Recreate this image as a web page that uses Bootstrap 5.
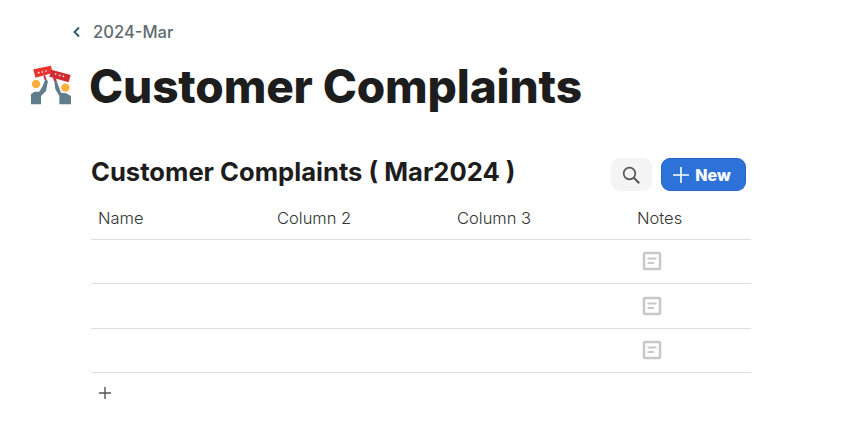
<!DOCTYPE html>
<html lang="en">
<head>
    <meta charset="UTF-8">
    <meta name="viewport" content="width=device-width, initial-scale=1.0">
    <title>Customer Complaints</title>
    <link href="https://cdn.jsdelivr.net/npm/bootstrap@5.3.0/dist/css/bootstrap.min.css" rel="stylesheet">
    <style>
        html, body { overflow: hidden; }
        body { font-family: Inter, "Liberation Sans", sans-serif; color: #1d1d1d; background: #fff; }
        .page-wrap { padding: 22px 0 0 30px; }
        .crumb { padding-left: 42px; height: 20px; gap: 12px; color: #5f6b70; font-size: 16.6px; font-weight: 500; line-height: 20px; }
        .title-row { margin-top: 18px; gap: 17px; height: 52px; }
        .page-title { font-size: 46px; font-weight: 800; line-height: 52px; letter-spacing: -0.15px; margin: 0; color: #1d1d1d; }
        .db-wrap { width: 660px; margin: 46px 0 0 61px; }
        .db-head { height: 44px; padding-right: 5px; }
        .db-title { font-size: 25.6px; font-weight: 700; line-height: 28px; margin: 0; color: #1d1d1d; }
        .head-btns { gap: 9px; }
        .btn-search { width: 41px; height: 33px; background: #f4f4f4; border-radius: 9px; border: 0; padding: 0 2px 0 0; }
        .btn-new { width: 85px; height: 33px; background: #2d72d9; border: 1px solid #2667c6; border-radius: 9px; color: #fff; font-size: 16px; font-weight: 800; padding: 0 3px 0 0; gap: 6px; }
        .btn-new:hover { background: #2d72d9; color: #fff; }
        .db-table { table-layout: fixed; width: 660px; margin: 0; }
        .db-table th, .db-table td { border-bottom: 1px solid #dedede; padding: 0 6px; height: 44px; vertical-align: middle; }
        .db-table tbody tr:nth-child(2) td { height: 45px; }
        .db-table th { font-size: 16.5px; font-weight: 300; color: #333; height: 37px; padding-bottom: 3px; }
        .db-table th:nth-child(1) { width: 180px; padding-left: 7px; }
        .db-table th:nth-child(2), .db-table th:nth-child(3) { width: 180px; }
        .db-table th:nth-child(4) { width: 120px; }
        .db-table td svg { display: block; margin-left: 5px; }
        .add-row { height: 40px; padding-left: 8px; }
    </style>
</head>
<body>
    <div class="page-wrap">
        <div class="crumb d-flex align-items-center">
            <svg width="9" height="12" viewBox="0 0 9 12"><path d="M7 1.5 2.5 6 7 10.5" fill="none" stroke="#2f5f7c" stroke-width="2"/></svg>
            <span>2024-Mar</span>
        </div>
        <div class="title-row d-flex align-items-center">
            <svg width="42" height="42" viewBox="12 12 126 126">
                <path d="M22 25 75 14 80 36 28 50z" fill="#e8362f"/>
                <path d="M76 26 134 42 128 64 70 47z" fill="#cf2b33"/>
                <path d="M52 44 58 43 62 58 56 58zM78 42 90 46 92 62 85 62z" fill="#c9303a"/>
                <g fill="#fff"><circle cx="38" cy="35" r="2.5"/><circle cx="49" cy="33" r="2.5"/><circle cx="60" cy="30" r="2.5"/><circle cx="89" cy="39" r="2.5"/><circle cx="101" cy="43" r="2.5"/><circle cx="112" cy="46" r="2.5"/></g>
                <circle cx="30" cy="69" r="12.5" fill="#fbb03b"/>
                <circle cx="118" cy="80" r="12.5" fill="#fbb03b"/>
                <path d="M58 55 66 60 60 90 45 105V130H15V100L25 92H40L50 75z" fill="#5f7d8c"/>
                <path d="M85 62 92 60 105 95 120 97 135 105V130H100V105L88 85z" fill="#5f7d8c"/>
            </svg>
            <h1 class="page-title">Customer Complaints</h1>
        </div>
        <div class="db-wrap">
            <div class="db-head d-flex justify-content-between align-items-start">
                <h2 class="db-title">Customer Complaints ( Mar2024 )</h2>
                <div class="head-btns d-flex">
                    <button class="btn btn-search d-flex align-items-center justify-content-center" type="button" aria-label="Search">
                        <svg width="20" height="20" viewBox="0 0 20 20"><circle cx="8.5" cy="8.5" r="5.8" fill="none" stroke="#555" stroke-width="1.7"/><path d="m12.8 12.8 5.4 5.4" stroke="#555" stroke-width="2"/></svg>
                    </button>
                    <button class="btn btn-new d-flex align-items-center justify-content-center" type="button">
                        <svg width="16" height="16" viewBox="0 0 16 16"><path d="M8 0v16M0 8h16" stroke="#fff" stroke-width="1.6"/></svg>
                        New
                    </button>
                </div>
            </div>
            <table class="db-table">
                <thead>
                    <tr><th>Name</th><th>Column 2</th><th>Column 3</th><th>Notes</th></tr>
                </thead>
                <tbody>
                    <tr><td></td><td></td><td></td><td><svg width="20" height="20" viewBox="0 0 20 20"><rect x="2" y="2" width="16" height="16" rx="1" fill="none" stroke="#c8c8c8" stroke-width="2.5"/><path d="M5.5 7.5h9M5.5 12h6.5" stroke="#c8c8c8" stroke-width="1.8"/></svg></td></tr>
                    <tr><td></td><td></td><td></td><td><svg width="20" height="20" viewBox="0 0 20 20"><rect x="2" y="2" width="16" height="16" rx="1" fill="none" stroke="#c8c8c8" stroke-width="2.5"/><path d="M5.5 7.5h9M5.5 12h6.5" stroke="#c8c8c8" stroke-width="1.8"/></svg></td></tr>
                    <tr><td></td><td></td><td></td><td><svg width="20" height="20" viewBox="0 0 20 20"><rect x="2" y="2" width="16" height="16" rx="1" fill="none" stroke="#c8c8c8" stroke-width="2.5"/><path d="M5.5 7.5h9M5.5 12h6.5" stroke="#c8c8c8" stroke-width="1.8"/></svg></td></tr>
                </tbody>
            </table>
            <div class="add-row d-flex align-items-center">
                <svg width="12" height="12" viewBox="0 0 12 12"><path d="M6 0v12M0 6h12" stroke="#555" stroke-width="1.4"/></svg>
            </div>
        </div>
    </div>
    <script src="https://cdn.jsdelivr.net/npm/bootstrap@5.3.0/dist/js/bootstrap.bundle.min.js"></script>
</body>
</html>
